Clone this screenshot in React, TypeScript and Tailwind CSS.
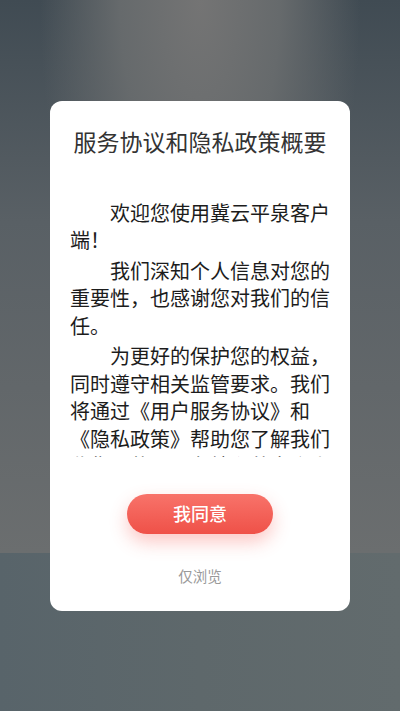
import React from "react";

const paragraphs = [
  "欢迎您使用冀云平泉客户端！",
  "我们深知个人信息对您的重要性，也感谢您对我们的信任。",
  "为更好的保护您的权益，同时遵守相关监管要求。我们将通过《用户服务协议》和《隐私政策》帮助您了解我们收集、使用、存储和共享个人信息的情况，以及您所享有的相关权利。",
];

export default function App() {
  return (
    <div className="relative h-[711px] w-full overflow-hidden font-['Noto_Sans_CJK_SC',sans-serif]">
      {/* blurred page behind the dialog */}
      <div className="flex h-full flex-col">
        <div className="flex-1 bg-[radial-gradient(ellipse_40%_70%_at_50%_0%,#747474_0%,#666a6c_50%,transparent_100%),linear-gradient(to_bottom,#404b53_0%,#596065_40%,#6b6e6f_100%)]" />
        <div className="h-[158px] bg-[linear-gradient(to_right,#58646a,#5e686b_50%,#626b6d)]" />
      </div>

      {/* dialog */}
      <div className="absolute inset-0 flex items-center justify-center">
        <div className="flex w-[300px] flex-col rounded-[12px] bg-white pt-[25px] pb-[25px]">
          <h1 className="text-center text-[23px] leading-[30px] text-[#333333]">服务协议和隐私政策概要</h1>

          <div className="mt-[43px] h-[258px] overflow-hidden pl-5 pr-[19px]">
            {paragraphs.map((p, i) => (
              <p
                key={i}
                className={`indent-[2em] text-[20px] leading-[27.5px] text-[#1c1c1c] ${i > 0 ? "mt-[3px]" : ""}`}
              >
                {p}
              </p>
            ))}
          </div>

          <div className="mt-[37px] flex justify-center">
            <button className="h-[40px] w-[146px] rounded-full bg-[linear-gradient(to_bottom,#f8736a,#ef5148)] text-[18px] font-medium text-white shadow-[0_8px_18px_rgba(245,85,75,0.32)]">
              我同意
            </button>
          </div>

          <div className="mt-[32px] text-center text-[14.5px] leading-[20px] text-[#9a9a9a]">仅浏览</div>
        </div>
      </div>
    </div>
  );
}
